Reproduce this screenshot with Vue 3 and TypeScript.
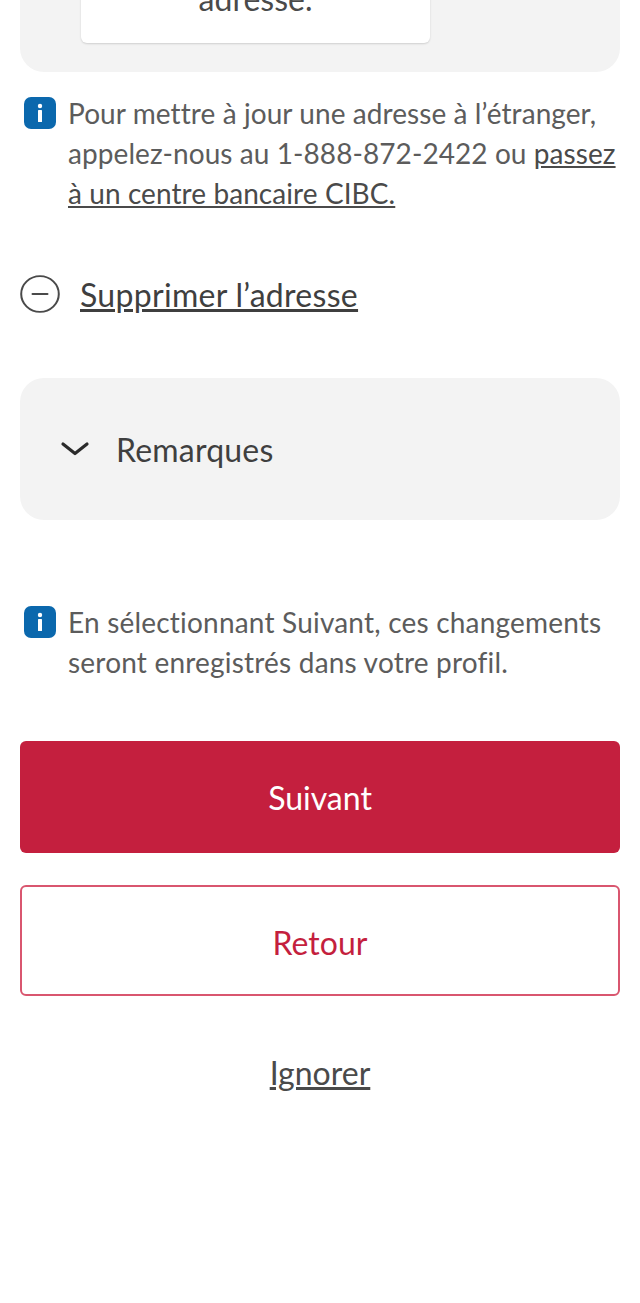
<script setup lang="ts">
const firstLines = ['Pour mettre à jour une adresse à l’étranger,', 'appelez-nous au 1-888-872-2422 ou ']
const secondLines = ['En sélectionnant Suivant, ces changements', 'seront enregistrés dans votre profil.']
</script>

<template>
  <main class="page">
    <section class="panel top-panel">
      <div class="card">adresse.</div>
    </section>

    <div class="notice first-notice">
      <svg class="info" viewBox="0 0 32 32" aria-hidden="true">
        <rect width="32" height="32" rx="7" fill="#0b68ad" />
        <rect x="14" y="13" width="4" height="12" rx="0.6" fill="#fff" />
        <circle cx="16" cy="9" r="2.2" fill="#fff" />
      </svg>
      <p>{{ firstLines[0] }}<br />{{ firstLines[1] }}<a href="#">passez<br />à un centre bancaire CIBC.</a></p>
    </div>

    <a class="remove" href="#">
      <svg class="minus" viewBox="0 0 40 40" preserveAspectRatio="none" aria-hidden="true">
        <circle cx="20" cy="20" r="18.8" fill="none" stroke="#4a4a4a" stroke-width="2" />
        <path d="M12.5 20h15" stroke="#4a4a4a" stroke-width="2" stroke-linecap="round" />
      </svg>
      <span>Supprimer l’adresse</span>
    </a>

    <section class="panel remarks">
      <svg class="chevron" viewBox="0 0 30 16" aria-hidden="true">
        <path d="M3 3l12 9.5L27 3" fill="none" stroke="#2b2b2b" stroke-width="3.2" stroke-linecap="round" stroke-linejoin="round" />
      </svg>
      <span>Remarques</span>
    </section>

    <div class="notice second-notice">
      <svg class="info" viewBox="0 0 32 32" aria-hidden="true">
        <rect width="32" height="32" rx="7" fill="#0b68ad" />
        <rect x="14" y="13" width="4" height="12" rx="0.6" fill="#fff" />
        <circle cx="16" cy="9" r="2.2" fill="#fff" />
      </svg>
      <p>{{ secondLines[0] }}<br />{{ secondLines[1] }}</p>
    </div>

    <button class="btn primary" type="button">Suivant</button>
    <button class="btn secondary" type="button">Retour</button>
    <a class="skip" href="#">Ignorer</a>
  </main>
</template>

<style>
html, body { margin: 0; background: #fff; overflow: hidden; }
</style>

<style scoped>
.page {
  box-sizing: border-box;
  width: 640px;
  height: 1303px;
  padding: 0 20px;
  overflow: hidden;
  font-family: Lato, "Open Sans", sans-serif;
  font-size: 32px;
  font-variant-ligatures: none;
  color: #5c5c5c;
}
.panel { background: #f3f3f3; border-radius: 24px; }
.top-panel {
  box-sizing: border-box;
  height: 172px;
  margin-top: -100px;
  padding: 0 190px 29px 61px;
  display: flex;
  align-items: flex-end;
}
.card {
  box-sizing: border-box;
  width: 349px;
  flex: none;
  height: 120px;
  padding-top: 56px;
  background: #fff;
  border-radius: 6px;
  box-shadow: 0 1px 2px rgba(0, 0, 0, 0.15);
  text-align: center;
  line-height: 40px;
  color: #4a4a4a;
}
.notice { display: flex; gap: 12px; padding-left: 4px; }
.notice p { margin: 0; line-height: 40px; font-size: 28px; letter-spacing: 0.08px; white-space: nowrap; }
.notice a { color: #4a4a4a; text-decoration: underline; }
.info { width: 32px; height: 32px; flex: none; margin-top: 4px; }
.first-notice { margin-top: 21px; }
.remove {
  display: flex;
  align-items: center;
  gap: 20px;
  margin-top: 61px;
  height: 40px;
  color: #3f3f3f;
  text-decoration: none;
}
.remove span { text-decoration: underline; letter-spacing: 0.3px; }
.minus { width: 40px; height: 38px; flex: none; }
.remarks {
  display: flex;
  align-items: center;
  gap: 26px;
  height: 142px;
  margin-top: 64px;
  padding-left: 40px;
  color: #3f3f3f;
  letter-spacing: 0.2px;
}
.chevron { width: 30px; height: 16px; flex: none; }
.second-notice { margin-top: 82px; }
.second-notice p { letter-spacing: 0.2px; }
.btn {
  display: block;
  box-sizing: border-box;
  width: 100%;
  border-radius: 6px;
  font-family: inherit;
  font-size: 32px;
}
.primary {
  height: 112px;
  margin-top: 59px;
  background: #c41f3e;
  border: 0;
  color: #fff;
}
.secondary {
  height: 111px;
  margin-top: 32px;
  padding-top: 4px;
  background: #fff;
  border: 2px solid #d9566f;
  color: #c41f3e;
}
.skip {
  display: block;
  width: max-content;
  margin: 57px auto 0;
  line-height: 40px;
  color: #4a4a4a;
}
</style>
